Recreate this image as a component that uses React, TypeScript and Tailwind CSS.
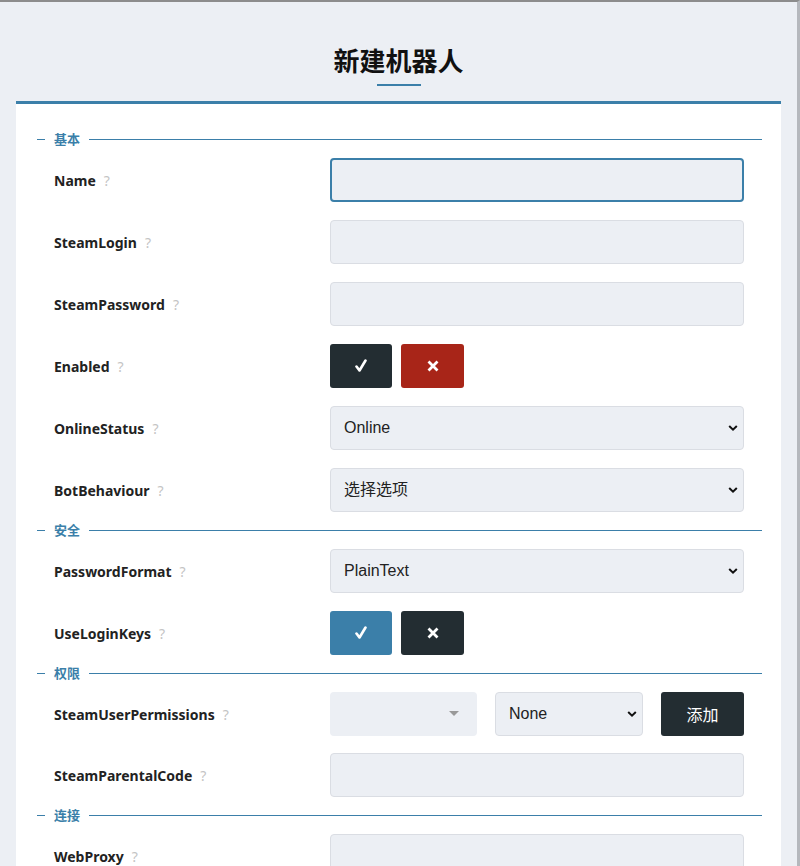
import type { ReactNode } from 'react'

const blue = '#3b7fa9'

function Legend({ title }: { title: string }) {
  return (
    <div className="flex items-center h-[37px]">
      <div className="w-2 h-px bg-[#3b7fa9]" />
      <span className="px-[9px] text-[13px] font-bold text-[#3b7fa9] leading-none font-['Noto_Sans','Noto_Sans_CJK_SC',sans-serif]">
        {title}
      </span>
      <div className="flex-1 h-px bg-[#3b7fa9]" />
    </div>
  )
}

function Row({ label, children }: { label: string; children: ReactNode }) {
  return (
    <div className="grid grid-cols-[276px_1fr] items-center pl-[17px] pr-[18px] h-[44px]">
      <div className="flex items-center text-[14px] font-bold text-[#222] font-['Noto_Sans',sans-serif]">
        {label}
        <span className="ml-2 font-normal text-[#c4c4c4]">?</span>
      </div>
      <div>{children}</div>
    </div>
  )
}

function TextInput({ focused = false }: { focused?: boolean }) {
  return (
    <input
      type="text"
      className={
        focused
          ? 'w-full h-[44px] rounded-[4px] bg-[#eceff4] border-2 border-[#3b7fa9] outline-none'
          : 'w-full h-[44px] rounded-[4px] bg-[#eceff4] border border-[#dadde3] outline-none'
      }
    />
  )
}

function Chevron() {
  return (
    <svg width="10" height="7" viewBox="0 0 10 7" className="absolute right-[6px] top-1/2 -translate-y-1/2 pointer-events-none">
      <path d="M1.2 1.5 L5 5.2 L8.8 1.5" fill="none" stroke="#111" strokeWidth="2" />
    </svg>
  )
}

function Select({ value, width }: { value: string; width?: string }) {
  return (
    <div className={`relative ${width ?? 'w-full'}`}>
      <div className="h-[44px] flex items-center pl-[13px] rounded-[4px] bg-[#eceff4] border border-[#dadde3] text-[16px] text-[#222] font-['Liberation_Sans','Noto_Sans_CJK_SC',sans-serif]">
        {value}
      </div>
      <Chevron />
    </div>
  )
}

function CheckIcon() {
  return (
    <svg width="14" height="14" viewBox="0 0 14 14">
      <path d="M2.5 7.5 L5.5 11.5 L11.5 1.5" fill="none" stroke="#fff" strokeWidth="2.6" strokeLinecap="round" strokeLinejoin="round" />
    </svg>
  )
}

function XIcon() {
  return (
    <svg width="12" height="12" viewBox="0 0 12 12">
      <path d="M1.5 1.5 L10.5 10.5 M10.5 1.5 L1.5 10.5" fill="none" stroke="#fff" strokeWidth="2.8" />
    </svg>
  )
}

function Toggle({ on, offColor }: { on: string; offColor: string }) {
  return (
    <div className="flex gap-[9px]">
      <button className={`w-[62px] h-[44px] rounded-[3px] flex items-center justify-center ${on}`}>
        <CheckIcon />
      </button>
      <button className={`w-[63px] h-[44px] rounded-[3px] flex items-center justify-center ${offColor}`}>
        <XIcon />
      </button>
    </div>
  )
}

export default function App() {
  return (
    <div className="min-h-screen bg-[#eceff4] border-t-2 border-t-[#8c8c8c] border-r-[3px] border-r-[#b5b8bd] pl-4 pr-4 pb-10">
      <div className="pt-[40px] flex flex-col items-center">
        <h1 className="text-[26px] font-bold text-[#111] leading-[36px] font-['Noto_Sans_CJK_SC',sans-serif]">
          新建机器人
        </h1>
        <div className="mt-[6px] w-[44px] h-[2px]" style={{ background: blue }} />
      </div>

      <div className="mt-[15px] bg-white border-t-[3px] border-[#3b7fa9] pl-[21px] pr-[19px] pt-[17px] pb-10">
        <Legend title="基本" />
        <div className="flex flex-col gap-[18px]">
          <Row label="Name"><TextInput focused /></Row>
          <Row label="SteamLogin"><TextInput /></Row>
          <Row label="SteamPassword"><TextInput /></Row>
          <Row label="Enabled"><Toggle on="bg-[#232d32]" offColor="bg-[#a82518]" /></Row>
          <Row label="OnlineStatus"><Select value="Online" /></Row>
          <Row label="BotBehaviour"><Select value="选择选项" /></Row>
        </div>

        <Legend title="安全" />
        <div className="flex flex-col gap-[18px]">
          <Row label="PasswordFormat"><Select value="PlainText" /></Row>
          <Row label="UseLoginKeys"><Toggle on="bg-[#3b7fa9]" offColor="bg-[#232d32]" /></Row>
        </div>

        <Legend title="权限" />
        <div className="flex flex-col gap-[17px]">
          <Row label="SteamUserPermissions">
            <div className="flex items-center">
              <div className="relative w-[147px] h-[44px] rounded-[4px] bg-[#eceff4]">
                <div className="absolute right-[18px] top-[19px] w-0 h-0 border-l-[5px] border-r-[5px] border-t-[5px] border-l-transparent border-r-transparent border-t-[#999]" />
              </div>
              <div className="ml-[18px]">
                <Select value="None" width="w-[148px]" />
              </div>
              <button className="ml-auto w-[83px] h-[44px] rounded-[3px] bg-[#232d32] text-white text-[16px] font-['Noto_Sans_CJK_SC',sans-serif]">
                添加
              </button>
            </div>
          </Row>
          <Row label="SteamParentalCode"><TextInput /></Row>
        </div>

        <Legend title="连接" />
        <div className="flex flex-col gap-[18px]">
          <Row label="WebProxy"><TextInput /></Row>
          <Row label="WebProxyUsername"><TextInput /></Row>
          <Row label="WebProxyPassword"><TextInput /></Row>
        </div>
      </div>
    </div>
  )
}
